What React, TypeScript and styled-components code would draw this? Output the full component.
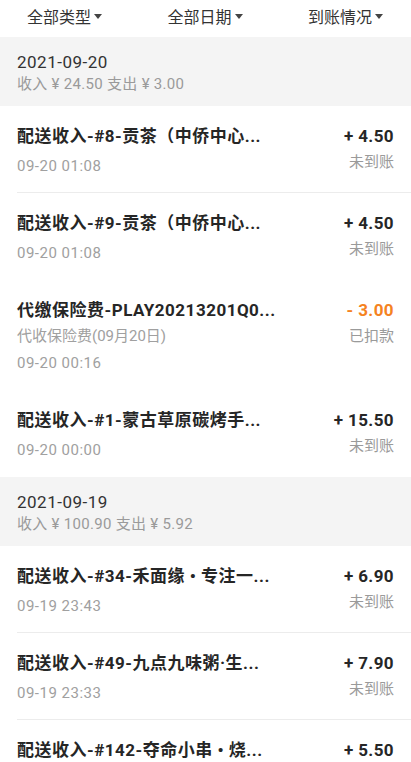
import React from "react";
import styled, { createGlobalStyle } from "styled-components";

const GlobalStyle = createGlobalStyle`
  html, body {
    margin: 0;
    padding: 0;
    background: #ffffff;
  }
  body {
    font-family: Roboto, "Noto Sans CJK SC", "Noto Sans", sans-serif;
    -webkit-font-smoothing: antialiased;
  }
`;

const Page = styled.div`
  width: 411px;
  height: 762px;
  overflow: hidden;
  background: #ffffff;
  display: flex;
  flex-direction: column;
`;

const FilterBar = styled.div`
  display: flex;
  justify-content: space-between;
  align-items: center;
  height: 37px;
  padding: 0 28px 5px 27px;
  box-sizing: border-box;
  background: #ffffff;
  flex-shrink: 0;
`;

const FilterItem = styled.div`
  display: flex;
  align-items: center;
  gap: 3px;
  font-size: 16px;
  color: #333333;
`;

const Caret = styled.span`
  width: 0;
  height: 0;
  border-left: 4.5px solid transparent;
  border-right: 4.5px solid transparent;
  border-top: 5px solid #444444;
  margin-top: 1px;
`;

const DayHeader = styled.div`
  background: #f4f4f4;
  padding: 14px 17px 11px;
  display: flex;
  flex-direction: column;
  flex-shrink: 0;
`;

const DayDate = styled.div`
  font-size: 17px;
  line-height: 22px;
  letter-spacing: 0.5px;
  color: #333333;
`;

const DaySummary = styled.div`
  font-size: 15px;
  line-height: 22px;
  letter-spacing: 0.3px;
  color: #9a9a9a;
`;

const Row = styled.div<{ divided?: boolean }>`
  position: relative;
  display: flex;
  justify-content: space-between;
  padding: 18px 17px 16px;
  flex-shrink: 0;
  &::after {
    content: "";
    position: absolute;
    left: 17px;
    right: 0;
    bottom: 0;
    height: 1px;
    background: ${({ divided }) => (divided ? "#ececec" : "transparent")};
  }
`;

const Left = styled.div`
  display: flex;
  flex-direction: column;
`;

const Title = styled.div`
  font-size: 17px;
  line-height: 24px;
  font-weight: 700;
  letter-spacing: 0.5px;
  color: #262626;
  white-space: nowrap;
`;

const Meta = styled.div<{ gap: number }>`
  font-size: 15px;
  line-height: 22px;
  color: #a0a0a0;
  margin-top: ${({ gap }) => gap}px;
  white-space: nowrap;
`;

const TimeText = styled(Meta)`
  letter-spacing: 0.5px;
`;

const Right = styled.div`
  display: flex;
  flex-direction: column;
  align-items: flex-end;
`;

const Amount = styled.div<{ negative?: boolean }>`
  font-size: 17px;
  line-height: 24px;
  font-weight: 700;
  letter-spacing: 0.4px;
  color: ${({ negative }) => (negative ? "#f5831f" : "#262626")};
  white-space: nowrap;
`;

const Status = styled.div`
  font-size: 15px;
  line-height: 22px;
  margin-top: 3px;
  color: #9a9a9a;
`;

interface IRecord {
  title: string;
  sub?: string;
  time: string;
  amount: string;
  status: string;
  negative?: boolean;
  divided?: boolean;
}

interface IDay {
  date: string;
  summary: string;
  records: IRecord[];
}

const days: IDay[] = [
  {
    date: "2021-09-20",
    summary: "收入 ¥ 24.50 支出 ¥ 3.00",
    records: [
      {
        title: "配送收入-#8-贡茶（中侨中心...",
        time: "09-20 01:08",
        amount: "+ 4.50",
        status: "未到账",
        divided: true,
      },
      {
        title: "配送收入-#9-贡茶（中侨中心...",
        time: "09-20 01:08",
        amount: "+ 4.50",
        status: "未到账",
      },
      {
        title: "代缴保险费-PLAY20213201Q0...",
        sub: "代收保险费(09月20日)",
        time: "09-20 00:16",
        amount: "- 3.00",
        status: "已扣款",
        negative: true,
      },
      {
        title: "配送收入-#1-蒙古草原碳烤手...",
        time: "09-20 00:00",
        amount: "+ 15.50",
        status: "未到账",
      },
    ],
  },
  {
    date: "2021-09-19",
    summary: "收入 ¥ 100.90 支出 ¥ 5.92",
    records: [
      {
        title: "配送收入-#34-禾面缘 • 专注一...",
        time: "09-19 23:43",
        amount: "+ 6.90",
        status: "未到账",
        divided: true,
      },
      {
        title: "配送收入-#49-九点九味粥·生...",
        time: "09-19 23:33",
        amount: "+ 7.90",
        status: "未到账",
        divided: true,
      },
      {
        title: "配送收入-#142-夺命小串 • 烧...",
        time: "09-19 23:20",
        amount: "+ 5.50",
        status: "未到账",
      },
    ],
  },
];

const filters = ["全部类型", "全部日期", "到账情况"];

const RecordRow = ({ title, sub, time, amount, status, negative, divided }: IRecord) => (
  <Row divided={divided}>
    <Left>
      <Title>{title}</Title>
      {sub && <Meta gap={3}>{sub}</Meta>}
      <TimeText gap={sub ? 5 : 7}>{time}</TimeText>
    </Left>
    <Right>
      <Amount negative={negative}>{amount}</Amount>
      <Status>{status}</Status>
    </Right>
  </Row>
);

const App = () => (
  <>
    <GlobalStyle />
    <Page>
      <FilterBar>
        {filters.map((f) => (
          <FilterItem key={f}>
            {f}
            <Caret />
          </FilterItem>
        ))}
      </FilterBar>
      {days.map((day) => (
        <React.Fragment key={day.date}>
          <DayHeader>
            <DayDate>{day.date}</DayDate>
            <DaySummary>{day.summary}</DaySummary>
          </DayHeader>
          {day.records.map((r, i) => (
            <RecordRow key={i} {...r} />
          ))}
        </React.Fragment>
      ))}
    </Page>
  </>
);

export default App;
